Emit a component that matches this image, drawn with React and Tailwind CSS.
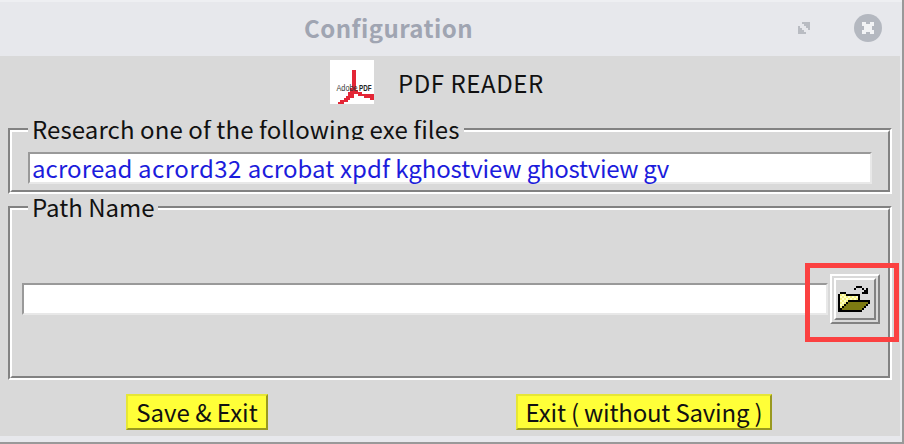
import React from "react";

const FONT = "font-['Noto_Sans_CJK_SC','Open_Sans',sans-serif]";

// Bitmap icon: each character is one cell coloured through the palette.
function Pixels({ rows, palette, cell, className }) {
  const w = rows[0].length * cell;
  const h = rows.length * cell;
  return (
    <svg className={className} width={w} height={h} viewBox={`0 0 ${w} ${h}`} shapeRendering="crispEdges">
      {rows.flatMap((row, y) =>
        [...row].map((c, x) =>
          palette[c] ? (
            <rect key={`${x}-${y}`} x={x * cell} y={y * cell} width={cell} height={cell} fill={palette[c]} />
          ) : null
        )
      )}
    </svg>
  );
}

const FOLDER = [
  ".........###....",
  "........#...#.#.",
  ".............##.",
  ".###........###.",
  "#ywy#######.....",
  "#wywywywyw#.....",
  "#ywywywywy#.....",
  "#wywy###########",
  "#ywy#oooooooooo#",
  "#wy#oooooooooo#.",
  "#y#oooooooooo#..",
  "##oooooooooo#...",
  "############....",
];
const FOLDER_COLORS = { "#": "#000000", y: "#f4f080", w: "#ffffc8", o: "#7d7a12" };

function AdobeLogo() {
  return (
    <div className="h-11 w-11 bg-white">
      <svg width="44" height="44" viewBox="0 0 44 44">
        <path
          shapeRendering="crispEdges"
          fill="#e32636"
          d="M22 10h4v18h-4zM20 28h6v2h-6zM20 30h8v2h-8zM18 32h14v2h-14zM18 34h6v2h-6zM28 34h16v2h-16zM16 36h8v2h-8zM34 36h10v2h-10zM14 38h6v2h-6zM40 38h4v2h-4zM10 40h8v2h-8zM8 42h6v2h-6z"
        />
        <text x="6.500" y="31" fontSize="9" textLength="21" lengthAdjust="spacingAndGlyphs" fontFamily="Liberation Sans, sans-serif" fill="#333">
          Adobe
        </text>
        <text x="29" y="31" fontSize="9" fontWeight="bold" textLength="12.500" lengthAdjust="spacingAndGlyphs" fontFamily="Liberation Sans, sans-serif" fill="#222">
          PDF
        </text>
      </svg>
    </div>
  );
}

// Grooved frame whose legend interrupts the top line.
function Group({ label, labelClass, className, children }) {
  return (
    <section className={`border-2 border-[#828282] border-r-white border-b-white ${className}`}>
      <div className="flex h-full flex-col border-2 border-white border-r-[#828282] border-b-[#828282]">
        <div className={`-mt-3 ml-4 h-5 shrink-0 overflow-hidden self-start bg-[#d9d9d9] pl-1 leading-[18px] whitespace-nowrap ${labelClass}`}>
          {label}
        </div>
        {children}
      </div>
    </section>
  );
}

export default function App() {
  return (
    <div className={`relative flex h-[444px] w-[904px] flex-col overflow-hidden border-r-2 border-b-2 border-[#999999] bg-[#e7e8ec] text-[24px] text-[#111] ${FONT}`}>
      <header className="flex h-14 shrink-0 items-center border-t-2 border-[#eeeff2] pb-[2px]">
        <h1 className="ml-[304px] w-[492px] text-[24px] leading-[52px] font-bold tracking-[0.45px] text-[#a0a5b2]">Configuration</h1>
        <svg width="16" height="16" viewBox="0 0 16 16" className="shrink-0">
          <path fill="#b9bcc2" d="M6 2h8v8h-2V8h-2V6H8V4H6zM2 6h2v2h2v2h2v2h2v2H2z" />
        </svg>
        <svg width="28" height="28" viewBox="0 0 28 28" className="ml-[42px] shrink-0">
          <circle cx="14" cy="14" r="14" fill="#b4b8c0" />
          <path fill="#f2f3f5" d="M8 8h4v2h4V8h4v4h-2v4h2v4h-4v-2h-4v2H8v-4h2v-4H8z" />
        </svg>
      </header>
      <main className="mr-[2px] flex h-[380px] flex-col bg-[#d9d9d9] px-2">
        <div className="ml-[322px] flex h-[72px] items-start pt-1">
          <AdobeLogo />
          <div className="ml-6 leading-[45px] tracking-[0.55px]">PDF READER</div>
        </div>
        <Group label="Research one of the following exe files" labelClass="w-[436px] tracking-[0.1px]" className="h-[66px] w-[884px] shrink-0">
          <div className="mt-3 ml-4 h-8 w-[844px] border-2 border-[#999] border-r-[#e8e8e8] border-b-[#e8e8e8] bg-white pl-[2px] leading-[28px] whitespace-nowrap text-[#1c1cdc]">
            <span className="tracking-[0.1px]">acroread </span>
            <span className="tracking-[0.5px]">acrord32 </span>
            <span className="tracking-[0.1px]">acrobat xpdf </span>
            <span className="tracking-[-0.1px]">kghostview </span>
            <span className="tracking-[-0.3px]">ghostview </span>
            <span>gv</span>
          </div>
        </Group>
        <Group label="Path Name" labelClass="w-[130px]" className="mt-3 h-[174px] w-[884px] shrink-0">
          <div className="mt-14 ml-[10px] flex items-center gap-[2px]">
            <div className="h-8 w-[806px] border-2 border-[#999] border-r-[#e8e8e8] border-b-[#e8e8e8] bg-white" />
            <button className="h-[50px] w-[50px] border-2 border-white border-r-[#828282] border-b-[#828282] p-[2px]">
              <span className="flex h-full w-full items-center justify-center border-2 border-white border-r-[#828282] border-b-[#828282]">
                <Pixels rows={FOLDER} palette={FOLDER_COLORS} cell={2} className="mr-[2px]" />
              </span>
            </button>
          </div>
        </Group>
        <div className="mt-[14px] ml-[118px] flex gap-[248px]">
          <button className="h-9 w-[142px] border-2 border-[#e6e635] border-r-[#999920] border-b-[#999920] bg-[#ffff38] leading-[32px] whitespace-nowrap">Save &amp; Exit</button>
          <button className="h-9 w-[256px] border-2 border-[#e6e635] border-r-[#999920] border-b-[#999920] bg-[#ffff38] leading-[32px] tracking-[-0.2px] whitespace-nowrap">Exit ( without Saving )</button>
        </div>
      </main>
      <div className="absolute top-[263px] left-[805px] h-[79px] w-[94px] border-[5px] border-[#fb4141]" />
    </div>
  );
}
